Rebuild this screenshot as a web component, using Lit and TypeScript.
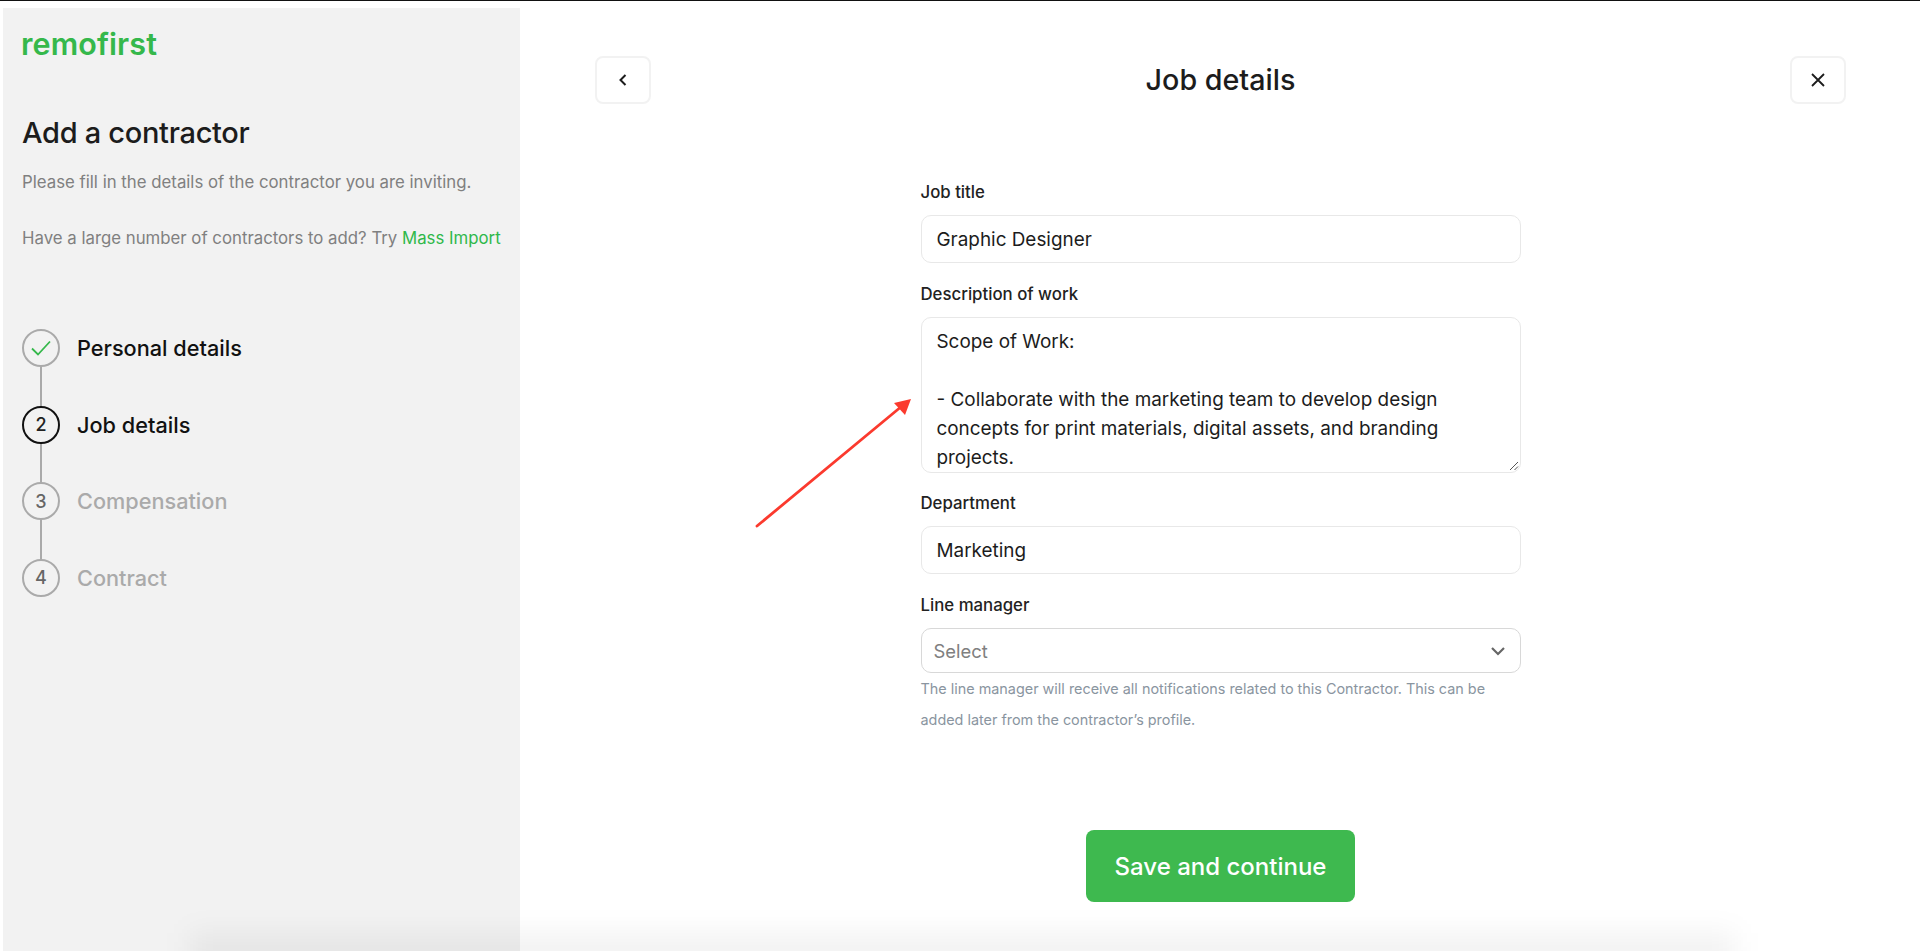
import { LitElement, html, css, svg } from "lit";
import { customElement } from "lit/decorators.js";

const steps = [
  { n: "", label: "Personal details", state: "done" },
  { n: "2", label: "Job details", state: "active" },
  { n: "3", label: "Compensation", state: "todo" },
  { n: "4", label: "Contract", state: "todo" },
];

@customElement("app-root")
export class AppRoot extends LitElement {
  static styles = css`
    :host { display: block; position: relative; width: 1920px; height: 951px; overflow: hidden; background: #fff; font-family: Inter, "Liberation Sans", sans-serif; color: #1c1c1c; }
    * { box-sizing: border-box; }
    .page { display: flex; height: 951px; border-top: 1px solid #111; padding-left: 3px; }
    .side { width: 517px; margin-top: 7px; background: #f2f2f2; padding: 16px 10px 0 19px; flex: none; }
    .logo { font-size: 30.5px; line-height: 40px; font-weight: 600; color: #35b84b; letter-spacing: 0.1px; margin-left: -1px; }
    h2 { margin: 47px 0 0; font-size: 29px; line-height: 44px; font-weight: 500; letter-spacing: -0.3px; color: #1c1c1c; }
    .side p { margin: 0; font-size: 16.8px; line-height: 24px; color: #808080; }
    .p1 { margin-top: 15px !important; }
    .p2 { margin-top: 32px !important; }
    .p2 a { color: #2fb84a; }
    .steps { margin-top: 79px; display: flex; flex-direction: column; }
    .step { display: flex; align-items: center; gap: 17px; position: relative; height: 38px; margin-bottom: 38.6px; font-size: 21.7px; font-weight: 500; }
    .step:last-child { margin-bottom: 0; }
    .step:not(:last-child)::after { content: ""; position: absolute; left: 18px; top: 38px; width: 2px; height: 39px; background: #aaa; }
    .dot { width: 38px; height: 38px; border-radius: 50%; border: 2px solid #aaa; display: flex; align-items: center; justify-content: center; font-size: 18px; font-weight: 500; color: #666; flex: none; }
    .active .dot { border-color: #111; color: #222; }
    .done .label, .active .label { color: #111; }
    .todo .label { color: #aaa; }
    .main { flex: 1; display: flex; flex-direction: column; align-items: center; padding: 55px 74px 0 75px; }
    .head { width: 100%; display: flex; align-items: center; justify-content: space-between; }
    h1 { margin: 0; font-size: 28.7px; line-height: 48px; font-weight: 500; color: #1c1c1c; }
    .icon { width: 56px; height: 48px; border: 2px solid #f2f2f2; border-radius: 8px; display: flex; align-items: center; justify-content: center; background: #fff; }
    .form { width: 600px; margin-top: 76px; display: flex; flex-direction: column; }
    label { display: block; font-size: 16.8px; line-height: 24px; font-weight: 500; color: #222; margin-bottom: 11px; }
    .field { height: 48px; border: 1px solid #e8e8e8; border-radius: 10px; padding: 0 15px; display: flex; align-items: center; font-size: 18.9px; color: #1c1c1c; margin-bottom: 19px; }
    .area { height: 156px; display: block; white-space: pre-line; line-height: 29px; padding: 9px 15px 0; overflow: hidden; position: relative; margin-bottom: 18px; }
    .grip { position: absolute; right: 1px; bottom: 1px; }
    .select { height: 45px; border-color: #d8d8d8; justify-content: space-between; padding: 0 14px 0 12px; font-size: 18.4px; color: #808080; margin-bottom: 0; }
    .help { font-size: 14.4px; line-height: 31px; color: #8a959f; }
    .save { margin-top: 95px; width: 269px; height: 72px; border-radius: 8px; background: #3eb94f; color: #fff; font-size: 24px; font-weight: 500; display: flex; align-items: center; justify-content: center; }
    .glow { position: absolute; left: 190px; right: 185px; bottom: -26px; height: 44px; background: rgba(0,0,0,0.05); filter: blur(14px); pointer-events: none; }
    .arrow { position: absolute; left: 750px; top: 390px; pointer-events: none; }
  `;

  private check() {
    return html`<svg width="22" height="22" viewBox="0 0 22 22" fill="none"><path d="M2 11.5l6 6L20 4.5" stroke="#35b84b" stroke-width="1.8"/></svg>`;
  }

  render() {
    return html`
      <div class="page">
        <aside class="side">
          <div class="logo">remofirst</div>
          <h2>Add a contractor</h2>
          <p class="p1">Please fill in the details of the contractor you are inviting.</p>
          <p class="p2">Have a large number of contractors to add? Try <a>Mass Import</a></p>
          <div class="steps">
            ${steps.map(s => html`
              <div class="step ${s.state}">
                <div class="dot">${s.state === "done" ? this.check() : s.n}</div>
                <div class="label">${s.label}</div>
              </div>`)}
          </div>
        </aside>
        <main class="main">
          <div class="head">
            <div class="icon"><svg width="16" height="16" viewBox="0 0 16 16" fill="none"><path d="M10.5 3L5.5 8l5 5" stroke="#1c1c1c" stroke-width="2"/></svg></div>
            <h1>Job details</h1>
            <div class="icon"><svg width="16" height="16" viewBox="0 0 16 16" fill="none"><path d="M2 2l12 12M14 2L2 14" stroke="#1c1c1c" stroke-width="1.8"/></svg></div>
          </div>
          <div class="form">
            <label>Job title</label>
            <div class="field">Graphic Designer</div>
            <label>Description of work</label>
            <div class="field area">Scope of Work:

- Collaborate with the marketing team to develop design concepts for print materials, digital assets, and branding projects.
              <svg class="grip" width="10" height="10" viewBox="0 0 10 10" fill="none">${svg`<path d="M1 9L9 1M5.5 9L9 5.5" stroke="#555" stroke-width="1"/>`}</svg>
            </div>
            <label>Department</label>
            <div class="field">Marketing</div>
            <label>Line manager</label>
            <div class="field select">Select
              <svg width="16" height="16" viewBox="0 0 16 16" fill="none"><path d="M2 5l6 6 6-6" stroke="#666" stroke-width="2.2"/></svg>
            </div>
            <div class="help">The line manager will receive all notifications related to this Contractor. This can be added later from the contractor’s profile.</div>
          </div>
          <div class="save">Save and continue</div>
        </main>
      </div>
      <div class="glow"></div>
      <svg class="arrow" width="170" height="150" viewBox="0 0 170 150" fill="none">
        <path d="M7 136L152 16" stroke="#fb3a2e" stroke-width="2.8" stroke-linecap="round"/>
        <path d="M161 9L144 13 155 25Z" fill="#fb3a2e"/>
      </svg>
    `;
  }
}
